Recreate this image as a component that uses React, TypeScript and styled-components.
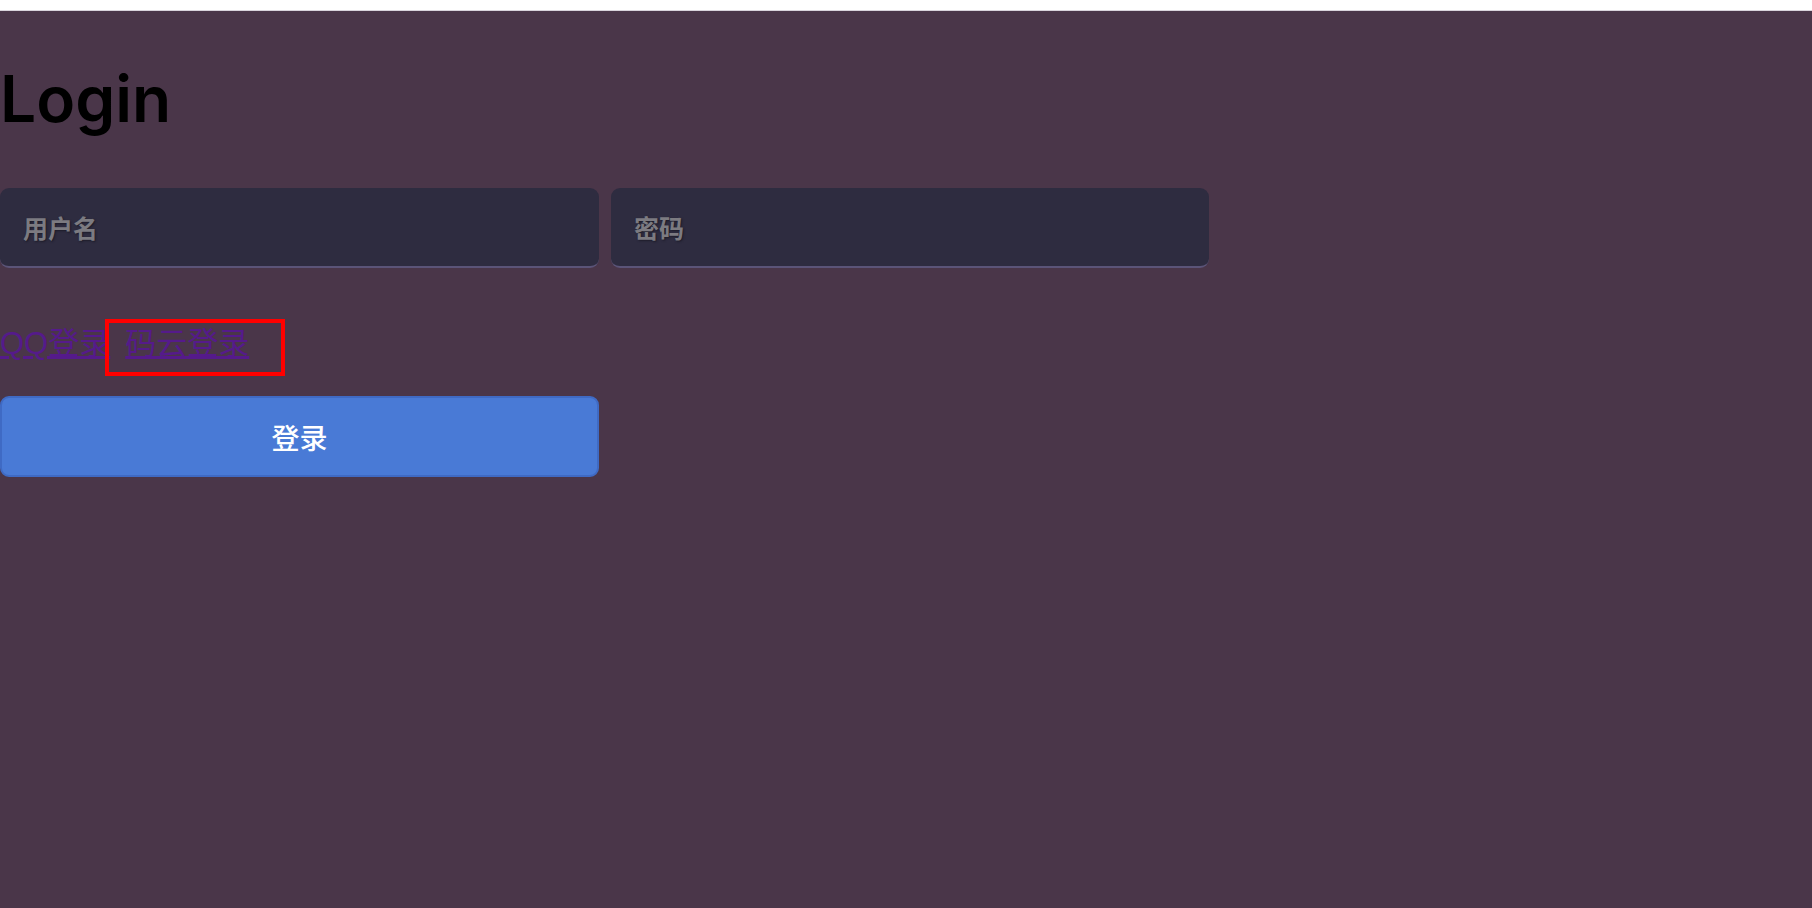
import React from "react";
import styled, { createGlobalStyle } from "styled-components";

const GlobalStyle = createGlobalStyle`
  html, body {
    margin: 0;
    padding: 0;
    background: #ffffff;
  }
  body {
    font-family: Inter, "Noto Sans CJK SC", sans-serif;
  }
`;

const TopStrip = styled.div`
  height: 10px;
  background: #ffffff;
  border-bottom: 1px solid #d9d4dc;
`;

const Page = styled.main`
  min-height: calc(100vh - 11px);
  background: #4a3649;
  display: flex;
  flex-direction: column;
  align-items: flex-start;
  padding-top: 56px;
  box-sizing: border-box;
`;

const Title = styled.h1`
  margin: 0;
  font-family: Inter, sans-serif;
  font-size: 64px;
  line-height: 64px;
  font-weight: 600;
  color: #000000;
`;

const InputRow = styled.div`
  display: flex;
  gap: 12px;
  margin-top: 57px;
`;

const Field = styled.input<{ $w: number }>`
  width: ${(p) => p.$w}px;
  height: 80px;
  box-sizing: border-box;
  background: #2e2c40;
  border: none;
  border-bottom: 2px solid #5b5478;
  border-radius: 9px;
  padding: 0 23px;
  font-family: "Noto Sans CJK SC", sans-serif;
  font-size: 25px;
  font-weight: 700;
  color: #d0d0d0;
  outline: none;
  &::placeholder {
    color: #7c7b81;
    text-shadow: 1px 1px 2px #1c1b28;
    opacity: 1;
  }
`;

const LinkRow = styled.div`
  position: relative;
  margin-top: 55px;
  height: 40px;
  display: flex;
  align-items: center;
  gap: 15px;
  font-family: "Liberation Sans", "Noto Sans CJK SC", sans-serif;
  font-size: 31px;
  line-height: 40px;
`;

const Link = styled.a`
  color: #551a8b;
  text-decoration: underline;
  text-underline-offset: 2px;
  padding-top: 2px;
`;

const Highlight = styled.div`
  position: absolute;
  left: 105px;
  top: -4px;
  width: 180px;
  height: 57px;
  box-sizing: border-box;
  border: 4px solid #ff0000;
  pointer-events: none;
`;

const Submit = styled.button`
  margin-top: 33px;
  width: 599px;
  height: 81px;
  box-sizing: border-box;
  background: #497ad6;
  border: 2px solid #3f6ac4;
  border-radius: 9px;
  color: #ffffff;
  font-family: "Noto Sans CJK SC", sans-serif;
  font-size: 28px;
  font-weight: 500;
  cursor: pointer;
`;

export default function App() {
  return (
    <>
      <GlobalStyle />
      <TopStrip />
      <Page>
        <Title>Login</Title>
        <InputRow>
          <Field $w={599} type="text" placeholder="用户名" />
          <Field $w={598} type="password" placeholder="密码" />
        </InputRow>
        <LinkRow>
          <Link href="#qq">QQ登录</Link>
          <Link href="#gitee">码云登录</Link>
          <Highlight />
        </LinkRow>
        <Submit type="button">登录</Submit>
      </Page>
    </>
  );
}
